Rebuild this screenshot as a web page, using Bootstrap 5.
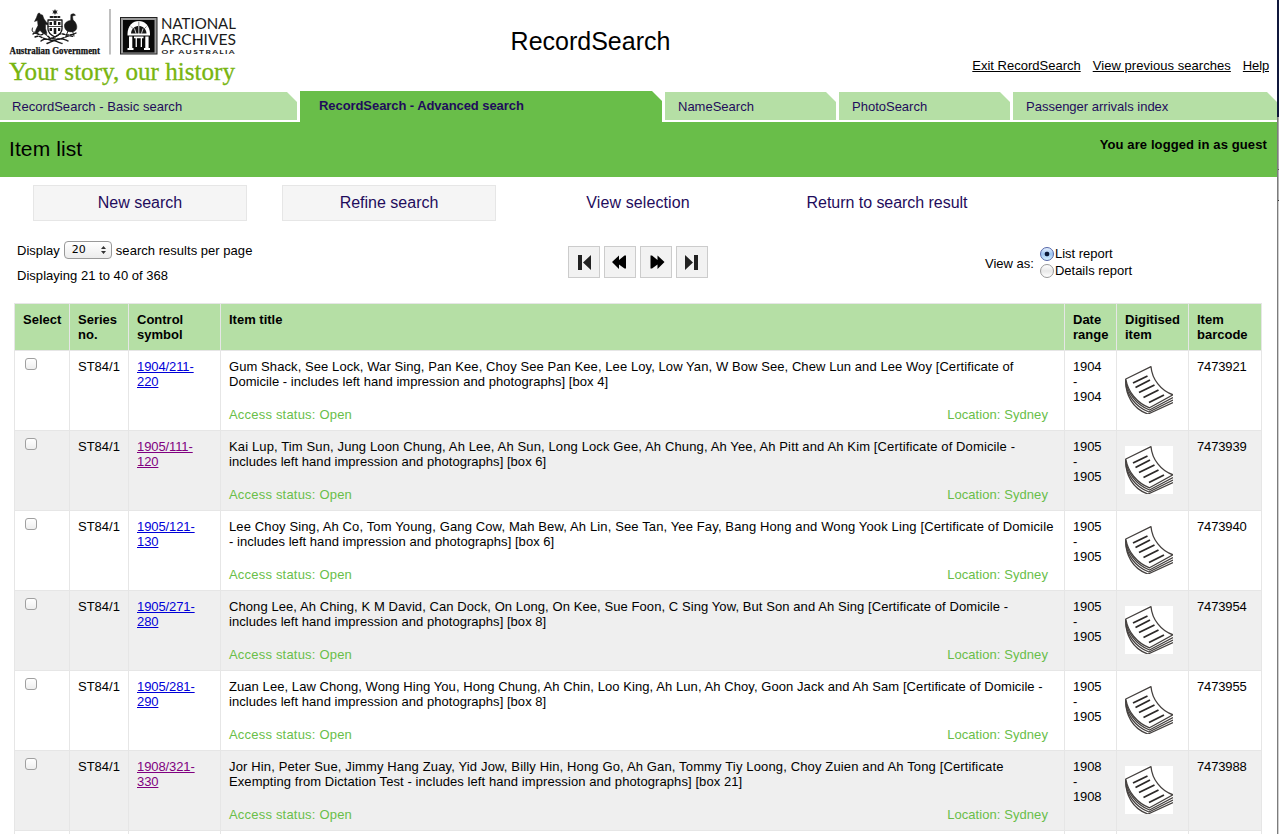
<!DOCTYPE html>
<html lang="en">
<head>
<meta charset="utf-8">
<meta name="viewport" content="width=device-width, initial-scale=1">
<title>RecordSearch - Item list</title>
<link href="https://cdn.jsdelivr.net/npm/bootstrap@5.3.0/dist/css/bootstrap.min.css" rel="stylesheet">
<style>
html,body{height:834px;overflow:hidden}
body{font:13px/15px "Liberation Sans",Arial,sans-serif;color:#000;background:#fff}
.page{width:1277px;height:834px;overflow:hidden}
.edge{width:2px;height:834px;background:linear-gradient(#a8a8a8 0 169px,#555 169px 170px,#b4b4b4 170px 200px,#333 200px 201px,#cfcfcf 201px);border-left:1px solid #7c7c7c}
.edge .top{height:117px;margin-left:-1px;background:#10183c}
.masthead{height:91px}
.masthead h1{font-size:25px;line-height:30px;margin:0;padding-top:26px;width:161px;text-align:center;white-space:nowrap}
.brandbox{width:510px}
.toplinks a{color:#000}
.toplinks{padding:58px 8px 0 0;gap:12px}
.toplinks a:nth-child(2){letter-spacing:.05px}
.toplinks a:nth-child(3){letter-spacing:-.15px}
.tabs{height:31px;gap:3px}
.tabs a{display:block;color:#1f0c5c;text-decoration:none;background:#b5dfa5;height:28px;margin-top:1px;line-height:29px;padding-left:13px;clip-path:polygon(0 0,calc(100% - 10px) 0,100% 10px,100% 100%,0 100%)}
.tabs a.first{padding-left:12px;letter-spacing:.04px}
.tabs a.current{background:#69be49;height:31px;margin-top:0;font-weight:bold;padding-left:19px;letter-spacing:-.07px}
.w-a{width:297px}.w-b{width:362px}.w-c{width:171px}.w-d{width:264px}
.titlebar{background:#69be49;height:55px;padding:0 10px 0 9px}
.titlebar h2{font-size:21px;line-height:24px;margin:15px 0 0;letter-spacing:.1px}
.titlebar strong{padding-top:15px;letter-spacing:.11px}
.actions{padding:8px 0 0 33px;gap:35px;height:44px}
.actions a{width:214px;height:36px;line-height:34px;font-size:16px;text-align:center;color:#1f0c5c;text-decoration:none;border:1px solid transparent}
.actions a.boxed{background:#f5f5f5;border-color:#e6e6e6}
.actions a:nth-child(3){letter-spacing:.1px}
.actions a:nth-child(4){letter-spacing:-.04px}
.controls{height:82px;padding-left:17px}
.perpage{width:551px;padding-top:20px;letter-spacing:.03px}
.shown{margin-top:9px}
.picker{width:48px;height:18px;border:1px solid #999;border-radius:4px;background:linear-gradient(#fff,#ececec);font:11px/16px "DejaVu Sans",sans-serif;padding:0 5px 0 7px}
.pager{padding-top:25px;gap:4px;width:417px}
.pager button{width:32px;height:32px;border:1px solid #ccc;background:#f2f2f2;padding:0}
.pager svg,.pager button{display:block}
.viewas{padding-top:24px;gap:6px}
.viewas .lead-in{padding-top:11px}
.opt{height:17px;gap:1px}
.dot{width:14px;height:14px;border:1px solid #999;border-radius:50%;background:linear-gradient(#fff,#e8e8e8 50%,#fff)}
.dot.on{border-color:#5466a8;background:radial-gradient(circle,#0a1838 0 2px,transparent 2.7px),linear-gradient(#e8f1ff,#9cc4f2 50%,#d5f0ff)}
.items{table-layout:fixed;width:1248px;margin:0 0 0 14px;border-collapse:collapse}
.items th,.items td{border:1px solid #e6e6e6;padding:8px;vertical-align:top;white-space:nowrap}
.items th{background:#b5dfa5;height:47px}
.items td{height:80px}
.items td:nth-child(5),.items td:nth-child(7){letter-spacing:-.15px}
.items tr.alt td{background:#efefef}
.items a{color:#0000d8;letter-spacing:-.1px}
.items a.seen{color:#800080}
.tick{display:block;width:12px;height:12px;border:1px solid #a0a0a0;border-radius:3px;background:linear-gradient(#fff,#eee);margin:-1px 0 0 2px}
.status{color:#69be49;margin-top:18px;padding-right:8px}
.status span:first-child{letter-spacing:.2px}
.status span:last-child{letter-spacing:.07px}
.s1{letter-spacing:.04px}.s2{letter-spacing:.08px}.s3{letter-spacing:.128px}.s4{letter-spacing:.143px}.s5{letter-spacing:.07px}
.doc{display:block;background:#fff;margin-top:7px}
</style>
</head>
<body>
<svg width="0" height="0" class="position-absolute">
<symbol id="doc" viewBox="0 0 48 48">
<g fill="#fff" stroke="#45413f" stroke-width="1.3" stroke-linejoin="round">
<path d="M.8 13C0 29 8 43 23 48L48 36.500"/>
<path d="M.8 13C0 27 10 41 24 46L48 34"/>
<path d="M.8 13C1 25 11 39 24.500 44L48 31.500"/>
<path d="M.8 13 26 .7C27 13 36 25 48 28.800L24.500 41.800C12 37 3 26 .8 13Z"/>
</g>
<path d="M8 17 22.500 10M10.500 21.500 25 14M14 26.500 29.500 19M18.500 31.500 33.500 24M24 36.500 39 29" stroke="#2c2928" stroke-width="1.900"/>
</symbol>
</svg>
<div class="d-flex">
<div class="page">
<header class="masthead d-flex">
<div class="brandbox">
<svg width="245" height="91" viewBox="0 0 245 91" role="img" aria-label="Australian Government, National Archives of Australia">
<g fill="#191919" stroke="#191919" stroke-linecap="round" stroke-linejoin="round">
<path d="M55 9l.8 1.800 2-.3-1.300 1.500 1.300 1.600-2-.3L55 15l-.8-1.700-2 .3 1.300-1.600-1.300-1.500 2 .3z" stroke="none"/>
<path d="M50.500 17h9" stroke-width="1.800" stroke-dasharray="2 1.800"/>
<path d="M37 16l1-2.500 1.500-.500 1 1.500 2 .5 1.500 4 3 4 3 .5-.5 1.500-4-.5v4l1.500 5h-4l-3-3-3 3h-2l1-4 2-4-.5-5-3 1 2-4z" stroke-width=".5"/>
<path d="M35 32c-2.500 1-3.500-1-2.500-4" fill="none"/>
<path d="M71 14.500c2-1.500 4-.5 4.500.8l-3 .7.500 4c3 2 4.500 6 3.500 9-1 2.500-5 3.500-8 2.500-3-1-4.500-4-4-7 1.500-3 4-4 6-4z" stroke-width=".5"/>
<path d="M68 31l-2 5M72.500 31l1.500 5" fill="none"/>
<path d="M48 20h14v9c0 4-3 6-7 8-4-2-7-4-7-8z" fill="#fff" stroke-width="1.300"/>
<path d="M49.500 22h2.500v3h-2.500zM53.700 21h2.600v4h-2.600zM58 22h2.500v3h-2.500zM49.500 28h2.500v3h-2.500zM53.700 28h2.600v6h-2.600zM58 28h2.300v3h-2.300z" stroke="none"/>
<path d="M48 26.500h14" stroke-width=".8"/>
<g fill="none" stroke-width="1.400">
<path d="M33 34c3-3 7 3 10 0 3-2 5 5 9 4 5-1 6-5 11-4 4 1 8 2 13-1" stroke-dasharray="2.500 1.500"/>
<path d="M35 37c6-3 9 4 14 2 5-1 7 1 11 0 5-1 9-5 14-2" stroke-dasharray="3 1.500"/>
<path d="M41 41c6-5 11 2 15-1 4-2 8-1 12 1M47 43.500l7-3 8 3" stroke-dasharray="3 1"/>
</g>
</g>
<text x="9.500" y="54" font-family="Liberation Serif" font-weight="bold" font-size="10.200" textLength="90.500" lengthAdjust="spacingAndGlyphs" fill="#111" stroke="#111" stroke-width=".25">Australian Government</text>
<path d="M110 9v45.500" stroke="#b0b0b0" stroke-width="1.600"/>
<rect x="120.500" y="17.500" width="36.500" height="36.500" fill="#9a9a9a" stroke="#222"/>
<rect x="123" y="20" width="31.500" height="32.500" fill="#080808"/>
<path d="M127.500 34C127.500 16.500 150 16.500 150 34V35.500H127.500z" fill="#fff"/>
<path d="M131 33.500C131.500 23.500 146 23.500 146.500 33.500z" fill="#161616"/>
<path d="M138.800 21.500v6M131 26.500l3 3M146.500 26.500l-3 3" stroke="#555" stroke-width=".7"/>
<path d="M138.800 26v8M134.500 28.500l1.500 5M143 28.500l-1.500 5" stroke="#fff" stroke-width=".8"/>
<path d="M129 36.500h3.300V49H129zM145.300 36.500h3.300V49h-3.300zM134 36.500h9.500v1.800H142V47h-1.300v-8.700h-3.800V47h-1.300v-8.700H134zM127.500 48h6v2h-6zM144 48h6v2h-6z" fill="#fff"/>
<g font-family="Lato,sans-serif" fill="#1b1b1b">
<text x="161" y="29" font-size="15" textLength="75" lengthAdjust="spacingAndGlyphs">NATIONAL</text>
<text x="161" y="44.800" font-size="15" textLength="75" lengthAdjust="spacingAndGlyphs">ARCHIVES</text>
<text x="161.500" y="53.800" font-size="6.200" font-weight="bold" letter-spacing="1" textLength="74.500" lengthAdjust="spacingAndGlyphs">OF AUSTRALIA</text>
</g>
<text x="9" y="79.500" font-family="Liberation Serif" font-size="24.500" textLength="226" lengthAdjust="spacingAndGlyphs" fill="#78b510" stroke="#78b510" stroke-width=".3">Your story, our history</text>
</svg>
</div>
<h1 class="fw-normal">RecordSearch</h1>
<nav class="toplinks d-flex ms-auto"><a href="#">Exit RecordSearch</a><a href="#">View previous searches</a><a href="#">Help</a></nav>
</header>
<nav class="tabs d-flex">
<a href="#" class="first w-a">RecordSearch - Basic search</a>
<a href="#" class="current w-b">RecordSearch - Advanced search</a>
<a href="#" class="w-c">NameSearch</a>
<a href="#" class="w-c">PhotoSearch</a>
<a href="#" class="w-d">Passenger arrivals index</a>
</nav>
<div class="titlebar d-flex justify-content-between"><h2 class="fw-normal">Item list</h2><strong>You are logged in as guest</strong></div>
<nav class="actions d-flex">
<a href="#" class="boxed">New search</a><a href="#" class="boxed">Refine search</a><a href="#">View selection</a><a href="#">Return to search result</a>
</nav>
<section class="controls d-flex">
<div class="perpage"><div class="d-flex align-items-center"><span>Display</span><span class="picker d-flex align-items-center justify-content-between mx-1">20<svg width="5" height="8"><path d="M0 3 2.500 0 5 3zM0 5 2.500 8 5 5z" fill="#333"/></svg></span><span>search results per page</span></div><div class="shown">Displaying 21 to 40 of 368</div></div>
<div class="pager d-flex">
<button aria-label="First"><svg width="30" height="30"><path d="M9 8h4v15H9zM22 8v15l-8-7.500z" fill="#222"/></svg></button>
<button aria-label="Previous"><svg width="30" height="30"><path d="M7 15 14 8.500v4.500l5.500-4.500H21v13h-1.500L14 17.500v4.500z" fill="#000"/></svg></button>
<button aria-label="Next"><svg width="30" height="30"><path d="M23.500 15 16.500 8.500v4.500L11 8.500H9.500v13H11l5.500-4v4.500z" fill="#000"/></svg></button>
<button aria-label="Last"><svg width="30" height="30"><path d="M17 8h4v15h-4zM8 8v15l8-7.500z" fill="#222"/></svg></button>
</div>
<div class="viewas d-flex"><span class="lead-in">View as:</span><div><div class="opt d-flex align-items-center"><span class="dot on"></span><span>List report</span></div><div class="opt d-flex align-items-center"><span class="dot"></span><span>Details report</span></div></div></div>
</section>
<table class="items">
<colgroup><col style="width:55px"><col style="width:59px"><col style="width:92px"><col style="width:844px"><col style="width:52px"><col style="width:72px"><col style="width:73px"></colgroup>
<thead><tr><th>Select</th><th>Series<br>no.</th><th>Control<br>symbol</th><th>Item title</th><th>Date<br>range</th><th>Digitised<br>item</th><th>Item<br>barcode</th></tr></thead>
<tbody>
<tr><td><span class="tick"></span></td><td>ST84/1</td><td><a href="#">1904/211-<br>220</a></td><td><span class="s2">Gum Shack, See Lock, War Sing, Pan Kee, Choy See Pan Kee, Lee Loy, Low Yan, W Bow See, Chew Lun and Lee Woy [Certificate of</span><br><span class="s1">Domicile - includes left hand impression and photographs] [box 4]</span><div class="status d-flex justify-content-between"><span>Access status: Open</span><span>Location: Sydney</span></div></td><td>1904<br>-<br>1904</td><td><svg class="doc" width="48" height="48"><use href="#doc"/></svg></td><td>7473921</td></tr>
<tr class="alt"><td><span class="tick"></span></td><td>ST84/1</td><td><a href="#" class="seen">1905/111-<br>120</a></td><td><span class="s3">Kai Lup, Tim Sun, Jung Loon Chung, Ah Lee, Ah Sun, Long Lock Gee, Ah Chung, Ah Yee, Ah Pitt and Ah Kim [Certificate of Domicile -</span><br><span class="s1">includes left hand impression and photographs] [box 6]</span><div class="status d-flex justify-content-between"><span>Access status: Open</span><span>Location: Sydney</span></div></td><td>1905<br>-<br>1905</td><td><svg class="doc" width="48" height="48"><use href="#doc"/></svg></td><td>7473939</td></tr>
<tr><td><span class="tick"></span></td><td>ST84/1</td><td><a href="#">1905/121-<br>130</a></td><td><span class="s3">Lee Choy Sing, Ah Co, Tom Young, Gang Cow, Mah Bew, Ah Lin, See Tan, Yee Fay, Bang Hong and Wong Yook Ling [Certificate of Domicile</span><br><span class="s1">- includes left hand impression and photographs] [box 6]</span><div class="status d-flex justify-content-between"><span>Access status: Open</span><span>Location: Sydney</span></div></td><td>1905<br>-<br>1905</td><td><svg class="doc" width="48" height="48"><use href="#doc"/></svg></td><td>7473940</td></tr>
<tr class="alt"><td><span class="tick"></span></td><td>ST84/1</td><td><a href="#">1905/271-<br>280</a></td><td><span class="s2">Chong Lee, Ah Ching, K M David, Can Dock, On Long, On Kee, Sue Foon, C Sing Yow, But Son and Ah Sing [Certificate of Domicile -</span><br><span class="s1">includes left hand impression and photographs] [box 8]</span><div class="status d-flex justify-content-between"><span>Access status: Open</span><span>Location: Sydney</span></div></td><td>1905<br>-<br>1905</td><td><svg class="doc" width="48" height="48"><use href="#doc"/></svg></td><td>7473954</td></tr>
<tr><td><span class="tick"></span></td><td>ST84/1</td><td><a href="#">1905/281-<br>290</a></td><td><span class="s5">Zuan Lee, Law Chong, Wong Hing You, Hong Chung, Ah Chin, Loo King, Ah Lun, Ah Choy, Goon Jack and Ah Sam [Certificate of Domicile -</span><br><span class="s1">includes left hand impression and photographs] [box 8]</span><div class="status d-flex justify-content-between"><span>Access status: Open</span><span>Location: Sydney</span></div></td><td>1905<br>-<br>1905</td><td><svg class="doc" width="48" height="48"><use href="#doc"/></svg></td><td>7473955</td></tr>
<tr class="alt"><td><span class="tick"></span></td><td>ST84/1</td><td><a href="#" class="seen">1908/321-<br>330</a></td><td><span class="s4">Jor Hin, Peter Sue, Jimmy Hang Zuay, Yid Jow, Billy Hin, Hong Go, Ah Gan, Tommy Tiy Loong, Choy Zuien and Ah Tong [Certificate</span><br><span class="s2">Exempting from Dictation Test - includes left hand impression and photographs] [box 21]</span><div class="status d-flex justify-content-between"><span>Access status: Open</span><span>Location: Sydney</span></div></td><td>1908<br>-<br>1908</td><td><svg class="doc" width="48" height="48"><use href="#doc"/></svg></td><td>7473988</td></tr>
<tr><td></td><td></td><td></td><td></td><td></td><td></td><td></td></tr>
</tbody>
</table>
</div>
<div class="edge"><div class="top"></div></div>
</div>
<script src="https://cdn.jsdelivr.net/npm/bootstrap@5.3.0/dist/js/bootstrap.bundle.min.js"></script>
</body>
</html>
